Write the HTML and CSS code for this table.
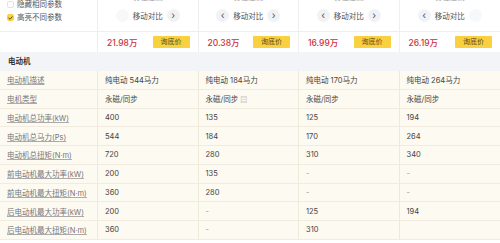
FILE: index.html
```html
<!DOCTYPE html>
<html lang="zh">
<head>
<meta charset="utf-8">
<link rel="stylesheet" href="styles.css">
</head>
<body>
<div class="page">
  <div class="head">
    <div class="opts">
      <div class="opt"><span class="box"></span><span>隐藏相同参数</span></div>
      <div class="opt"><span class="box on"><svg viewBox="0 0 8 8" width="6" height="6"><path d="M1.3 4.2 L3.2 6 L6.7 2" fill="none" stroke="#3a2a00" stroke-width="1.3" stroke-linecap="round" stroke-linejoin="round"/></svg></span><span>高亮不同参数</span></div>
    </div>
    <div class="car">
      <div class="cut">钉在左侧</div>
      <div class="nav"><span class="arr off"></span><span class="nt">移动对比</span><span class="arr">›</span></div>
    </div>
    <div class="car">
      <div class="cut">钉在左侧</div>
      <div class="nav"><span class="arr">‹</span><span class="nt">移动对比</span><span class="arr">›</span></div>
    </div>
    <div class="car">
      <div class="cut">钉在左侧</div>
      <div class="nav"><span class="arr">‹</span><span class="nt">移动对比</span><span class="arr">›</span></div>
    </div>
    <div class="car">
      <div class="cut">钉在左侧</div>
      <div class="nav"><span class="arr">‹</span><span class="nt">移动对比</span><span class="arr off"></span></div>
    </div>
  </div>
  <div class="prices">
    <div class="pl"></div>
    <div class="pc"><span class="price">21.98万</span><span class="btn">询底价</span></div>
    <div class="pc"><span class="price">20.38万</span><span class="btn">询底价</span></div>
    <div class="pc"><span class="price">16.99万</span><span class="btn">询底价</span></div>
    <div class="pc"><span class="price">26.19万</span><span class="btn">询底价</span></div>
  </div>
  <div class="section">电动机</div>
  <div class="table">
    <div class="lab">电动机描述</div><div class="val">纯电动 544马力</div><div class="val">纯电动 184马力</div><div class="val">纯电动 170马力</div><div class="val">纯电动 264马力</div>
    <div class="lab">电机类型</div><div class="val">永磁/同步</div><div class="val">永磁/同步 <span class="ic">▤</span></div><div class="val">永磁/同步</div><div class="val">永磁/同步</div>
    <div class="lab">电动机总功率(kW)</div><div class="val">400</div><div class="val">135</div><div class="val">125</div><div class="val">194</div>
    <div class="lab">电动机总马力(Ps)</div><div class="val">544</div><div class="val">184</div><div class="val">170</div><div class="val">264</div>
    <div class="lab">电动机总扭矩(N·m)</div><div class="val">720</div><div class="val">280</div><div class="val">310</div><div class="val">340</div>
    <div class="lab">前电动机最大功率(kW)</div><div class="val">200</div><div class="val">135</div><div class="val dash">-</div><div class="val dash">-</div>
    <div class="lab">前电动机最大扭矩(N·m)</div><div class="val">360</div><div class="val">280</div><div class="val dash">-</div><div class="val dash">-</div>
    <div class="lab">后电动机最大功率(kW)</div><div class="val">200</div><div class="val dash">-</div><div class="val">125</div><div class="val">194</div>
    <div class="lab">后电动机最大扭矩(N·m)</div><div class="val">360</div><div class="val dash">-</div><div class="val">310</div><div class="val"></div>
  </div>
</div>
</body>
</html>
```

FILE: styles.css
```css
* { box-sizing: border-box; margin: 0; padding: 0; }
html, body { background: #fff; }
body {
  width: 500px;
  height: 243px;
  overflow: hidden;
  font-family: "Inter", "Noto Sans CJK SC", sans-serif;
  font-size: 8px;
  color: #333;
}
.page { width: 500px; }

.head {
  display: grid;
  grid-template-columns: 98px repeat(4, 1fr);
  height: 32px;
  border-bottom: 1px solid #eeeeee;
}
.opts {
  display: flex;
  flex-direction: column;
  gap: 4px;
  padding: 0 0 0 7px;
  border-right: 1px solid #efefef;
}
.opt {
  display: flex;
  align-items: center;
  gap: 3px;
  height: 9px;
  color: #555;
  font-size: 7.5px;
  line-height: 9px;
}
.box {
  width: 7px;
  height: 7px;
  border: 1px solid #e2e2e2;
  border-radius: 2px;
  background: #fff;
  display: flex;
  align-items: center;
  justify-content: center;
}
.box.on {
  background: #f8d244;
  border-color: #f8d244;
}
.car {
  display: flex;
  flex-direction: column;
  align-items: center;
  border-right: 1px solid #efefef;
}
.car:last-child { border-right: 0; }
.cut {
  margin-top: -7px;
  height: 9px;
  font-size: 7.5px;
  line-height: 9px;
  color: #999;
}
.nav {
  margin-top: 7px;
  display: flex;
  align-items: center;
  gap: 4px;
}
.arr {
  width: 13px;
  height: 13px;
  border-radius: 50%;
  background: #f1f2f6;
  color: #555;
  font-size: 10px;
  line-height: 12px;
  text-align: center;
}
.arr.off { background: #f7f8fa; }
.nt { color: #555; font-size: 7.5px; }

.prices {
  display: grid;
  grid-template-columns: 98px repeat(4, 1fr);
  height: 20px;
}
.pl { border-right: 1px solid #efefef; }
.pc {
  display: flex;
  align-items: center;
  justify-content: space-between;
  padding: 0 8px 0 9px;
  border-right: 1px solid #efefef;
}
.pc:last-child { border-right: 0; }
.price {
  color: #cf2f3b;
  font-size: 8.5px;
  font-weight: 500;
}
.btn {
  width: 37px;
  height: 12px;
  background: #f9d03f;
  color: #5a4718;
  font-size: 7px;
  line-height: 12px;
  text-align: center;
  border-radius: 1px;
}

.section {
  height: 19px;
  background: #f3f4f8;
  padding-left: 8px;
  font-weight: 700;
  color: #333;
  line-height: 19px;
  font-size: 7.5px;
}

.table {
  display: grid;
  grid-template-columns: 98px repeat(4, 1fr);
  grid-auto-rows: 18.75px;
  background: #fdfaf1;
}
.lab, .val {
  display: flex;
  align-items: center;
  border-bottom: 1px solid #f1ecdf;
  border-right: 1px solid #efe9da;
  font-size: 7.5px;
  white-space: nowrap;
}
.lab {
  padding-left: 7px;
  color: #777;
  text-decoration: underline;
  text-decoration-color: #aaa;
  text-underline-offset: 1px;
}
.val { padding-left: 7px; color: #444; }
.val:nth-child(5n) { border-right: 0; }
.dash { color: #999; }
.ic { color: #999; margin-left: 2px; font-size: 7px; }
```
